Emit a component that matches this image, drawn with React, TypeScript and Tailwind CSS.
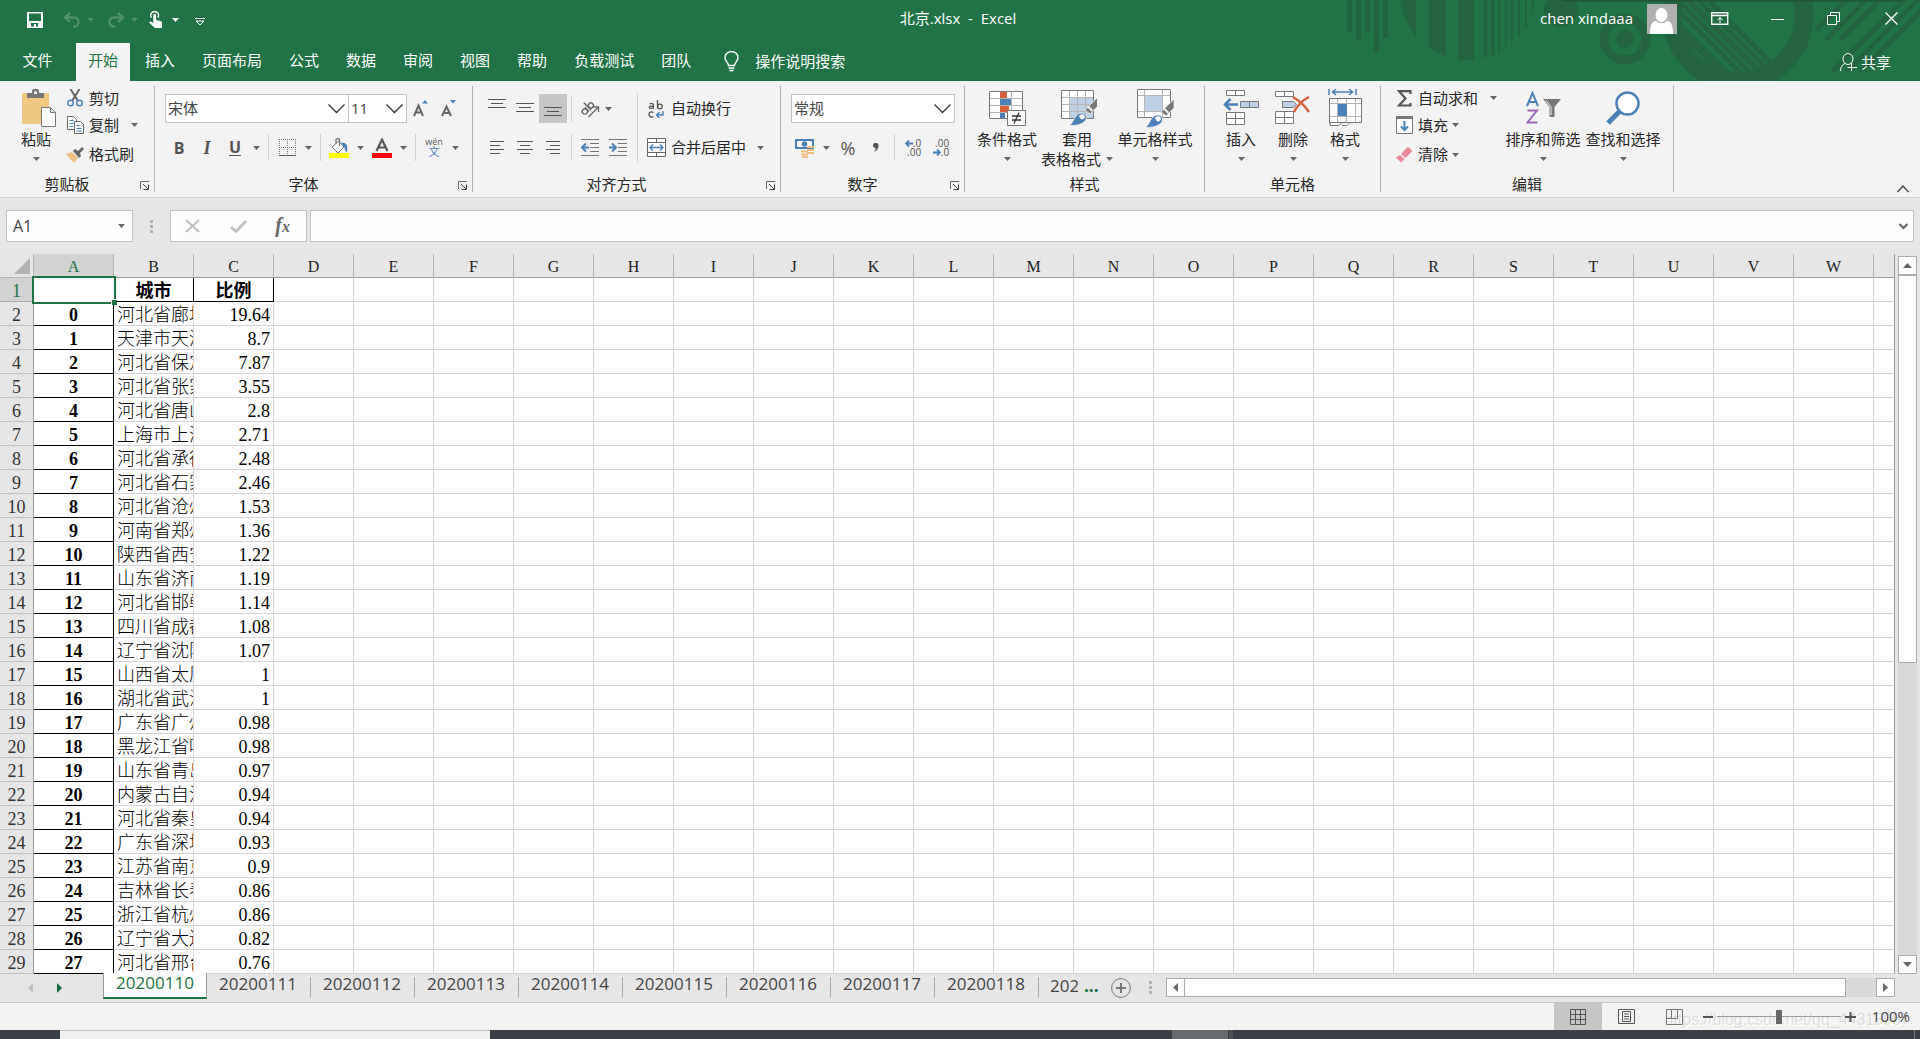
import type { ReactNode } from "react";

const UI_FONT = "font-['Open_Sans','Noto_Sans_CJK_SC',sans-serif]";
const CELL_FONT = "font-['Liberation_Serif','Noto_Sans_CJK_SC',serif]";

const tabs = ["插入", "页面布局", "公式", "数据", "审阅", "视图", "帮助", "负载测试", "团队"];

const columns = "ABCDEFGHIJKLMNOPQRSTUVW".split("");

const rows: [string, string][] = [
  ["河北省廊坊市", "19.64"],
  ["天津市天津市", "8.7"],
  ["河北省保定市", "7.87"],
  ["河北省张家口市", "3.55"],
  ["河北省唐山市", "2.8"],
  ["上海市上海市", "2.71"],
  ["河北省承德市", "2.48"],
  ["河北省石家庄市", "2.46"],
  ["河北省沧州市", "1.53"],
  ["河南省郑州市", "1.36"],
  ["陕西省西安市", "1.22"],
  ["山东省济南市", "1.19"],
  ["河北省邯郸市", "1.14"],
  ["四川省成都市", "1.08"],
  ["辽宁省沈阳市", "1.07"],
  ["山西省太原市", "1"],
  ["湖北省武汉市", "1"],
  ["广东省广州市", "0.98"],
  ["黑龙江省哈尔滨市", "0.98"],
  ["山东省青岛市", "0.97"],
  ["内蒙古自治区", "0.94"],
  ["河北省秦皇岛市", "0.94"],
  ["广东省深圳市", "0.93"],
  ["江苏省南京市", "0.9"],
  ["吉林省长春市", "0.86"],
  ["浙江省杭州市", "0.86"],
  ["辽宁省大连市", "0.82"],
  ["河北省邢台市", "0.76"],
];

const sheets = [
  "20200111",
  "20200112",
  "20200113",
  "20200114",
  "20200115",
  "20200116",
  "20200117",
  "20200118",
];

/* Small shared pieces */

function Caret({ className = "fill-[#666]" }: { className?: string }) {
  return (
    <svg width="7" height="4" viewBox="0 0 7 4" className={className}>
      <path d="M0 0h7L3.5 4z" />
    </svg>
  );
}

function MenuButton({ label, wide }: { label: string; wide?: boolean }) {
  return (
    <button
      aria-label={label}
      className={`flex h-7 shrink-0 items-center justify-center ${wide ? "w-7" : "w-[15px]"}`}
    >
      <Caret />
    </button>
  );
}

function IconButton({
  label,
  active,
  children,
}: {
  label: string;
  active?: boolean;
  children: ReactNode;
}) {
  return (
    <button
      aria-label={label}
      className={`flex h-[29px] w-7 shrink-0 items-center justify-center ${active ? "bg-[#c6c6c6]" : ""}`}
    >
      {children}
    </button>
  );
}

function Separator() {
  return <div className="mx-1 h-[27px] w-px shrink-0 bg-[#d2d2d2]" />;
}

function Combo({
  label,
  value,
  className,
}: {
  label: string;
  value: string;
  className: string;
}) {
  return (
    <div className={`relative h-[29px] ${className}`}>
      <select
        aria-label={label}
        className="h-full w-full appearance-none border border-[#c1c1c1] bg-white pl-[2px] text-[15px] text-[#444] outline-none"
      >
        <option>{value}</option>
      </select>
      <svg
        width="17"
        height="10"
        viewBox="0 0 17 10"
        className="pointer-events-none absolute top-[10px] right-1 fill-none stroke-[#333]"
      >
        <path d="M.5 .5l8 8 8-8" strokeWidth="1.3" />
      </svg>
    </div>
  );
}

function Group({
  label,
  launcher,
  className,
  children,
}: {
  label: string;
  launcher?: boolean;
  className: string;
  children: ReactNode;
}) {
  return (
    <section
      aria-label={label}
      className={`flex h-[106px] shrink-0 flex-col border-r border-[#b1b1b1] ${className}`}
    >
      <div className="flex-1">{children}</div>
      <div className="flex h-[14px] items-start">
        <span className={`flex-1 text-center leading-3 ${launcher ? "pr-[6px]" : ""}`}>
          {label}
        </span>
        {launcher && (
          <button aria-label={`${label}设置`} className="mt-[3px] w-[14px]">
            <svg width="10" height="9" viewBox="0 0 10 9" className="fill-none stroke-[#666]">
              <path d="M.5 8V.5H9" />
              <path d="M3 3l5 5M8.500 3.500v5h-5" stroke="#444" />
            </svg>
          </button>
        )}
      </div>
    </section>
  );
}

function BigButton({
  label,
  second,
  className,
  children,
}: {
  label: string;
  second?: string;
  className: string;
  children: ReactNode;
}) {
  return (
    <button className={`flex shrink-0 flex-col items-center whitespace-nowrap ${className}`}>
      <span className="flex h-[43px] items-center justify-center">{children}</span>
      <span className="leading-5">{label}</span>
      <span className="flex h-5 items-center gap-[5px] leading-5">
        {second}
        <Caret />
      </span>
    </button>
  );
}

function SmallButton({
  label,
  menu,
  children,
}: {
  label: string;
  menu?: "near" | "far";
  children: ReactNode;
}) {
  return (
    <button className="flex items-center whitespace-nowrap">
      <span className="mr-1 flex w-5 justify-center">{children}</span>
      {label}
      {menu && (
        <span className={menu === "far" ? "ml-3" : "ml-1"}>
          <Caret />
        </span>
      )}
    </button>
  );
}

function Lines({ rows, y }: { rows: [number, number][]; y: number }) {
  return (
    <svg width="20" height="28" viewBox="0 0 20 28" className="stroke-[#555]">
      {rows.map(([x, w], i) => (
        <path key={i} d={`M${x} ${y + i * 4 + 0.5}h${w}`} />
      ))}
    </svg>
  );
}

/* Title bar */

function TitleArt() {
  const d = "#24633f";
  return (
    <svg width="580" height="81" viewBox="0 0 580 81" className="absolute top-0 right-0">
      <defs>
        <clipPath id="drum">
          <circle cx="128" cy="-8" r="68" />
        </clipPath>
        <clipPath id="wheel">
          <circle cx="398" cy="15" r="57" />
        </clipPath>
        <linearGradient id="shade" x1="0" x2="0" y1="0" y2="1">
          <stop offset="0" stopColor="#1f4a33" />
          <stop offset="1" stopColor="#217346" stopOpacity="0" />
        </linearGradient>
      </defs>
      <path
        fill={d}
        d="M7 0h5v32H7zM16 0h5v41h-5zM25 0h5v32h-5zM34 0h5v52h-5zM43 0h5v38h-5z"
      />
      <path
        clipPath="url(#drum)"
        fill={d}
        d="M60 0h16v70H60zM89 0h17v70H89zM118 0h16v70h-16zM144 0h3v70h-3zM151 0h3v70h-3zM158 0h2v70h-2zM165 0h2v70h-2zM171 0h2v70h-2zM178 0h2v70h-2zM185 0h2v70h-2zM192 0h2v70h-2z"
      />
      <circle cx="221" cy="10" r="17" fill={d} />
      <circle cx="285" cy="39" r="21" fill="none" stroke={d} strokeWidth="9" />
      <circle cx="285" cy="39" r="9" fill={d} />
      <circle cx="398" cy="15" r="66" fill="none" stroke={d} strokeWidth="19" />
      <g clipPath="url(#wheel)" stroke={d} strokeWidth="5">
        <path d="M356 -12l84 84M346 -12l84 84M336 -12l84 84M326 -12l84 84M316 -12l84 84" />
        <path d="M302 -10l84 84" strokeWidth="9" />
      </g>
      <g stroke={d} strokeWidth="5">
        <path d="M486 40L530 -4M500 40L544 -4M492 72L568 -4M506 72L582 -4M520 72L596 -4M476 30L506 0" />
      </g>
      <path fill="url(#shade)" d="M222 0h340v4H222z" />
    </svg>
  );
}

function TitleBar() {
  return (
    <div className="relative grid h-[43px] grid-cols-3 items-start text-white">
      <div className="flex h-10 items-center pl-[27px]">
        <button aria-label="保存">
          <svg width="16" height="16" viewBox="0 0 16 16" className="fill-white">
            <path
              fillRule="evenodd"
              d="M0 0h16v16H0zM2 1.500v7.500h12V1.500zM4 11v3.500h3V12h2v2.500h2V11z"
            />
          </svg>
        </button>
        <button aria-label="撤消" className="ml-5 flex items-center gap-[6px]">
          <svg width="18" height="16" viewBox="0 0 18 16" className="fill-none stroke-[#4f9068]">
            <path d="M7 1L2 5.500l5 4.500M2.500 5.500H11c6 0 6 9 0 9h-1" strokeWidth="2.500" />
          </svg>
          <Caret className="fill-[#4f9068]" />
        </button>
        <button aria-label="恢复" className="ml-[13px] flex items-center gap-[6px]">
          <svg width="18" height="16" viewBox="0 0 18 16" className="fill-none stroke-[#4f9068]">
            <path d="M11 1l5 4.500L11 10M15.500 5.500H7c-6 0-6 9 0 9h1" strokeWidth="2.500" />
          </svg>
          <Caret className="fill-[#4f9068]" />
        </button>
        <button aria-label="触摸/鼠标模式" className="ml-[11px] flex items-center gap-[10px]">
          <svg width="13" height="18" viewBox="0 0 13 18" className="fill-white">
            <path d="M2.500 6.500A3.800 3.800 0 1 1 8.800 6.500" fill="none" stroke="#fff" strokeWidth="1.400" />
            <path d="M4.300 4.500a1.400 1.400 0 0 1 2.800 0V9l4.400 1c1 .3 1.500 1 1.500 2v5H6L.5 12c-.8-1 .6-2.200 1.800-1.300l2 1.300z" />
          </svg>
          <Caret className="fill-white" />
        </button>
        <button aria-label="自定义快速访问工具栏" className="ml-4 pt-[3px]">
          <svg width="10" height="8" viewBox="0 0 10 8" className="fill-none stroke-white">
            <path d="M0 .5h10M1 3l4 4 4-4z" />
          </svg>
        </button>
      </div>
      <h1 className="flex h-[37px] items-center justify-center pr-1 text-[15px] whitespace-pre">
        北京.xlsx  -  Excel
      </h1>
      <div className="flex h-[37px] items-center justify-end pr-[22px]">
        <span className="mr-[14px] text-[15px]">chen xindaaa</span>
        <svg width="30" height="30" viewBox="0 0 30 30">
          <path fill="#b1b1b1" d="M0 0h30v30H0z" />
          <ellipse cx="14.500" cy="11" rx="6" ry="7" fill="#fff" />
          <path fill="#fff" d="M3 30c0-9 2-13 6-13 3 3 8 3 11 0 4 0 6 4 6 13z" />
        </svg>
        <button aria-label="功能区显示选项" className="ml-[34px]">
          <svg width="18" height="13" viewBox="0 0 18 13" className="fill-none stroke-white">
            <path d="M.75 .75h16v11.500h-16zM1 3.500h16" strokeWidth="1.300" />
            <path d="M9 11V5.500M6.500 8L9 5.500 11.500 8" />
          </svg>
        </button>
        <button aria-label="最小化" className="ml-[42px]">
          <svg width="13" height="13" viewBox="0 0 13 13" className="stroke-white">
            <path d="M0 7.500h13" />
          </svg>
        </button>
        <button aria-label="向下还原" className="ml-[43px]">
          <svg width="13" height="13" viewBox="0 0 13 13" className="fill-none stroke-white">
            <path d="M.5 3.500h9v9h-9zM3.500 3.500v-3h9v9h-3" />
          </svg>
        </button>
        <button aria-label="关闭" className="ml-[45px]">
          <svg width="13" height="13" viewBox="0 0 13 13" className="stroke-white">
            <path d="M.5 .5l12 12M12.500 .5l-12 12" strokeWidth="1.300" />
          </svg>
        </button>
      </div>
    </div>
  );
}

function RibbonTabs() {
  return (
    <nav className="relative flex h-[38px] items-stretch text-[15px] text-white">
      <button className="mr-px w-[75px] pb-1">文件</button>
      <div className="flex gap-[3px]">
        <button className="bg-[#f3f3f3] px-3 pb-1 text-[#217346]">开始</button>
        {tabs.map((tab) => (
          <button key={tab} className="px-3 pb-1">
            {tab}
          </button>
        ))}
      </div>
      <button className="ml-[21px] flex items-center gap-4 pb-[2px]">
        <svg width="15" height="21" viewBox="0 0 15 21" className="fill-none stroke-white">
          <path
            d="M4.500 14.500c0-3-3.500-4-3.500-8a6.500 6 0 0 1 13 0c0 4-3.500 5-3.500 8zM4.500 17h6M5.500 19.500h4"
            strokeWidth="1.400"
          />
        </svg>
        操作说明搜索
      </button>
      <button className="mr-[29px] ml-auto flex items-center gap-1">
        <svg width="17" height="19" viewBox="0 0 17 19" className="fill-none stroke-white">
          <ellipse cx="8" cy="6" rx="5" ry="5.500" />
          <path d="M.5 18c0-4 2-6.500 4.500-7.500M11.500 10v8M7.500 14.500H17" />
        </svg>
        共享
      </button>
    </nav>
  );
}

/* Ribbon */

function ClipboardGroup() {
  return (
    <Group label="剪贴板" launcher className="w-[155px]">
      <div className="flex">
        <BigButton label="粘贴" className="ml-[14px] w-11">
          <svg width="44" height="38" viewBox="-7 0 44 38">
            <rect x="1" y="4" width="27" height="31" rx="1" fill="#edc880" />
            <path fill="#777" d="M6 4h5V1.500Q11 0 12.500 0h4Q18 0 18 1.500V4h5v5H6z" />
            <path fill="#f3f3f3" d="M13 2.500h3V5h-3z" />
            <path fill="#fff" stroke="#777" d="M20.500 18.500h9l5 5v14h-14zM29.500 18.500v5h5" />
          </svg>
        </BigButton>
        <div className="ml-[7px] grid grid-rows-[24px_30px_29px] justify-items-start">
          <SmallButton label="剪切">
            <svg width="16" height="18" viewBox="0 0 16 18" className="fill-none">
              <path d="M3.500 0l7.500 12M12.500 0L5 12" stroke="#666" strokeWidth="2" />
              <circle cx="3.500" cy="14" r="2.800" stroke="#4a80b8" strokeWidth="1.400" />
              <circle cx="12.500" cy="14" r="2.800" stroke="#4a80b8" strokeWidth="1.400" />
            </svg>
          </SmallButton>
          <SmallButton label="复制" menu="far">
            <svg width="17" height="18" viewBox="0 0 17 18">
              <path fill="#fff" stroke="#666" d="M.5 .5h6l3 3v10h-9z" />
              <path stroke="#4a80b8" d="M2.500 4.500h4M2.500 7.500h4M2.500 10.500h4" />
              <path fill="#fff" stroke="#666" d="M7.500 5.500h6l3 3v9h-9z" />
              <path stroke="#4a80b8" d="M9.500 9.500h3M9.500 12.500h5M9.500 15h5" />
            </svg>
          </SmallButton>
          <SmallButton label="格式刷">
            <svg width="18" height="16" viewBox="0 0 18 16">
              <path fill="#edc080" d="M0 7l6-2 6 6-4 5z" />
              <path fill="#666" d="M7 4l2-2 3 2 4-4 2 2-4 4 1 3-2 2z" />
            </svg>
          </SmallButton>
        </div>
      </div>
    </Group>
  );
}

function FontGroup() {
  return (
    <Group label="字体" launcher className="w-[318px]">
      <div className="flex flex-col gap-[11px] pt-2 pl-[10px]">
        <div className="flex">
          <Combo label="字体" value="宋体" className="w-[184px]" />
          <Combo label="字号" value="11" className="-ml-px w-[59px]" />
          <IconButton label="增大字号">
            <svg width="16" height="18" viewBox="0 0 16 18">
              <path d="M1 16L5.500 5.500 10 16M2.500 12.500h6" fill="none" stroke="#666" strokeWidth="2" />
              <path d="M9 3.500L12 0l3 3.500z" fill="#4a80b8" />
            </svg>
          </IconButton>
          <IconButton label="减小字号">
            <svg width="16" height="18" viewBox="0 0 16 18">
              <path d="M1 16L5.500 6.500 10 16M3 13h5" fill="none" stroke="#666" strokeWidth="2" />
              <path d="M9 0h6l-3 3.500z" fill="#4a80b8" />
            </svg>
          </IconButton>
        </div>
        <div className="flex h-[27px] items-center text-[#555]">
          <IconButton label="加粗">
            <b className="text-base">B</b>
          </IconButton>
          <IconButton label="倾斜">
            <b className="font-['Liberation_Serif',serif] text-lg italic">I</b>
          </IconButton>
          <IconButton label="下划线">
            <b className="border-b border-[#555] text-base leading-4">U</b>
          </IconButton>
          <MenuButton label="下划线样式" />
          <Separator />
          <IconButton label="边框">
            <svg width="17" height="17" viewBox="0 0 17 17" className="fill-none stroke-[#777]">
              <path d="M0 .5h17M.5 0v16M16.500 0v16M8.500 0v16M0 8.500h17" strokeDasharray="1 1" />
              <path d="M0 16.500h17" stroke="#555" />
            </svg>
          </IconButton>
          <MenuButton label="边框样式" />
          <Separator />
          <IconButton label="填充颜色">
            <svg width="20" height="20" viewBox="0 0 20 20">
              <path d="M3 9l7-6 5 6-6 6z" fill="#fff" stroke="#777" />
              <path d="M7 6V1.500Q9 -.5 10.500 1.500V8" fill="none" stroke="#777" strokeWidth="1.300" />
              <path d="M12 5c6-1 7 3 6 9-2 0-2-4-3-5z" fill="#4a80b8" />
              <path d="M0 15h20v5H0z" fill="#ff0" />
            </svg>
          </IconButton>
          <MenuButton label="填充颜色选项" />
          <IconButton label="字体颜色">
            <svg width="20" height="20" viewBox="0 0 20 20">
              <path d="M4.500 13L10 1.500 15.500 13M6.500 9.500h7" fill="none" stroke="#555" strokeWidth="2.200" />
              <path d="M0 15h20v5H0z" fill="red" />
            </svg>
          </IconButton>
          <MenuButton label="字体颜色选项" />
          <Separator />
          <IconButton label="拼音">
            <span className="flex flex-col items-center leading-none">
              <span className="text-[9px] leading-[8px]">wén</span>
              <span className="text-[11px] leading-[11px] text-[#4a80b8]">文</span>
            </span>
          </IconButton>
          <MenuButton label="拼音选项" />
        </div>
      </div>
    </Group>
  );
}

function AlignGroup() {
  return (
    <Group label="对齐方式" launcher className="w-[308px]">
      <div className="flex pl-[10px]">
        <div className="flex flex-col gap-[11px] pt-2">
          <div className="flex items-center">
            <IconButton label="顶端对齐">
              <Lines y={4} rows={[[1, 18], [4, 12], [1, 18]]} />
            </IconButton>
            <IconButton label="垂直居中">
              <Lines y={8} rows={[[1, 18], [4, 12], [1, 18]]} />
            </IconButton>
            <IconButton label="底端对齐" active>
              <Lines y={12} rows={[[1, 18], [4, 12], [1, 18]]} />
            </IconButton>
            <Separator />
            <IconButton label="方向">
              <svg width="20" height="18" viewBox="0 0 20 18" className="fill-none stroke-[#666]">
                <g transform="rotate(-45 7 8)" strokeWidth="1.400">
                  <circle cx="3" cy="9" r="2.600" />
                  <path d="M6 6v6M8.500 2v10" />
                  <circle cx="11.500" cy="9" r="2.600" />
                </g>
                <path d="M8.500 17L18 7.500M13.500 7h5v5" strokeWidth="1.300" />
              </svg>
            </IconButton>
            <button aria-label="方向选项" className="flex w-2 justify-center">
              <Caret />
            </button>
          </div>
          <div className="flex h-[27px] items-center">
            <IconButton label="左对齐">
              <Lines y={7} rows={[[3, 14], [3, 10], [3, 14], [3, 10]]} />
            </IconButton>
            <IconButton label="居中">
              <Lines y={7} rows={[[2, 16], [5, 10], [2, 16], [5, 10]]} />
            </IconButton>
            <IconButton label="右对齐">
              <Lines y={7} rows={[[3, 14], [7, 10], [3, 14], [7, 10]]} />
            </IconButton>
            <Separator />
            <IconButton label="减少缩进量">
              <svg width="18" height="17" viewBox="0 0 18 17" className="fill-none stroke-[#777]">
                <path d="M0 .5h18M9 4.500h9M9 8.500h9M9 12.500h9M0 16.500h18" />
                <path d="M8 8.500H1.500M5 4.500l-4 4 4 4" stroke="#4a80b8" strokeWidth="2" />
              </svg>
            </IconButton>
            <IconButton label="增加缩进量">
              <svg width="18" height="17" viewBox="0 0 18 17" className="fill-none stroke-[#777]">
                <path d="M0 .5h18M9 4.500h9M9 8.500h9M9 12.500h9M0 16.500h18" />
                <path d="M0 8.500h6.500M3 4.500l4 4-4 4" stroke="#4a80b8" strokeWidth="2" />
              </svg>
            </IconButton>
          </div>
        </div>
        <div className="mt-[7px] ml-[5px] h-[69px] w-px bg-[#d2d2d2]" />
        <div className="ml-[7px] flex flex-col gap-[11px] pt-2">
          <button className="flex h-[29px] items-center gap-1">
            <span className="flex w-[22px] justify-center">
              <svg width="16" height="18" viewBox="0 0 16 18" className="fill-none stroke-[#555]">
                <path d="M1.500 4Q5 2.500 5.500 5v4M5.500 6Q1 6 1.200 7.500 2 9.500 5.500 7.500M9.500 0v8.500" strokeWidth="1.300" />
                <circle cx="12" cy="6.500" r="2.300" strokeWidth="1.300" />
                <path d="M5.500 12.500C2 11 1 13 1 14.500S3 18 5.500 16.500" strokeWidth="1.300" />
                <path d="M15 11v4H9M11.500 12l-3 3 3 3" stroke="#4a80b8" strokeWidth="1.400" />
              </svg>
            </span>
            自动换行
          </button>
          <div className="flex h-[27px] items-center">
            <button className="flex items-center gap-1">
              <span className="flex w-[22px] justify-center">
                <svg width="19" height="19" viewBox="0 0 19 19" className="fill-white stroke-[#666]">
                  <path d="M.5 .5h18v18H.5zM.5 4.500h18M.5 14.500h18M9.500 0v4M9.500 15v4" />
                  <path d="M3 9.500h13M6 6.500l-3 3 3 3M13 6.500l3 3-3 3" fill="none" stroke="#4a80b8" strokeWidth="1.400" />
                </svg>
              </span>
              合并后居中
            </button>
            <MenuButton label="合并选项" wide />
          </div>
        </div>
      </div>
    </Group>
  );
}

function NumberGroup() {
  return (
    <Group label="数字" launcher className="w-[184px]">
      <div className="flex flex-col gap-[11px] pt-2 pl-[10px]">
        <Combo label="数字格式" value="常规" className="w-[164px]" />
        <div className="flex h-[27px] items-center text-[#555]">
          <IconButton label="会计数字格式">
            <svg width="20" height="20" viewBox="0 0 20 20">
              <path fill="#4a80b8" d="M0 1h19v10H0z" />
              <path fill="#fff" d="M2 3.500l2-.5h11l2 .5v5l-2 .5H4l-2-.5z" />
              <circle cx="9.500" cy="6" r="2.700" fill="#4a80b8" />
              <path stroke="#edc080" strokeWidth="2" d="M12 9h7M12 12h7M12 15h7M6 13.500h7M6 16.500h7M7 19h6" />
            </svg>
          </IconButton>
          <MenuButton label="会计数字格式选项" />
          <IconButton label="百分比样式">
            <span className="text-lg">%</span>
          </IconButton>
          <IconButton label="千位分隔样式">
            <svg width="6" height="9" viewBox="0 0 6 9" className="fill-[#555]">
              <path d="M0 2.500a2.600 2.600 0 0 1 5.500 0C5.500 6 3.500 8 .8 9 2.500 7.500 2.800 6 2.600 5 1 5 0 4 0 2.500z" />
            </svg>
          </IconButton>
          <Separator />
          <IconButton label="增加小数位数">
            <span className="flex flex-col items-end text-[10px] leading-[9px]">
              <span className="flex items-center">
                <svg width="8" height="7" viewBox="0 0 8 7" className="fill-none stroke-[#4a80b8]">
                  <path d="M8 3.500H1.500M4 .5l-3 3 3 3" strokeWidth="1.800" />
                </svg>
                .0
              </span>
              <span>.00</span>
            </span>
          </IconButton>
          <IconButton label="减少小数位数">
            <span className="flex flex-col items-end text-[10px] leading-[9px]">
              <span>.00</span>
              <span className="flex items-center">
                <svg width="8" height="7" viewBox="0 0 8 7" className="fill-none stroke-[#4a80b8]">
                  <path d="M0 3.500h6.500M4 .5l3 3-3 3" strokeWidth="1.800" />
                </svg>
                .0
              </span>
            </span>
          </IconButton>
        </div>
      </div>
    </Group>
  );
}

function Brush() {
  return (
    <>
      <path fill="#777" stroke="#f3f3f3" strokeWidth=".8" d="M38 8v9l-8 8-5-4z" />
      <path fill="#f3f3f3" d="M29 17l4 4-1.500 1.500-4-4z" />
      <path fill="#4a80b8" stroke="#f3f3f3" strokeWidth=".8" d="M9 36c5-1 5-12 13-12 5 0 6 6 2 9-4 3-10 4-15 3z" />
      <path fill="#fff" d="M19 27c2-3 6-2 6 1-1 3-4 3-5 1z" />
    </>
  );
}

function StyleGroup() {
  return (
    <Group label="样式" className="w-60">
      <div className="flex pl-2">
        <BigButton label="条件格式" className="w-[68px]">
          <svg width="38" height="36" viewBox="0 0 38 36">
            <path fill="#fff" stroke="#777" d="M1.500 1.500h33v27h-33z" />
            <path stroke="#b5b5b5" d="M2 8.500h32M2 15.500h32M2 22.500h32M12.500 2v26M23.500 2v26" />
            <path fill="#d9603b" d="M12 2h7v6h-7zM12 16h9v6h-9z" />
            <path fill="#4a80b8" d="M12 9h11v6H12zM12 23h5v5h-5z" />
            <path fill="#fff" stroke="#777" d="M19.500 20.500h18v15h-18z" />
            <path stroke="#333" strokeWidth="1.300" d="M24 26h9M24 30h9M31 22.500l-5 11" />
          </svg>
        </BigButton>
        <BigButton label="套用" second="表格格式" className="w-[72px]">
          <svg width="39" height="37" viewBox="-2 0 39 37">
            <path fill="#fff" stroke="#777" d="M1.500 1.500h32v28h-32z" />
            <path fill="#bdd0e6" d="M10 9h23v20H10z" />
            <path stroke="#b5b5b5" d="M2 8.500h31M2 15.500h31M2 22.500h31M9.500 2v27M17.500 2v27M25.500 2v27" />
            <Brush />
          </svg>
        </BigButton>
        <BigButton label="单元格样式" className="ml-[3px] w-[78px]">
          <svg width="39" height="40" viewBox="0 0 39 40">
            <path fill="#fff" stroke="#777" d="M1.500 1.500h33v28h-33z" />
            <path stroke="#b5b5b5" d="M2 7.500h32M2 23.500h32M8.500 2v27M26.500 2v27" />
            <path fill="#bdd0e6" d="M9 8h17v15H9z" />
            <g transform="translate(0 3)">
              <Brush />
            </g>
          </svg>
        </BigButton>
      </div>
    </Group>
  );
}

function CellsGroup() {
  return (
    <Group label="单元格" className="w-[176px]">
      <div className="flex pl-[10px]">
        <BigButton label="插入" className="w-[52px]">
          <svg width="36" height="35" viewBox="0 0 36 35" className="stroke-[#777]">
            <path fill="#fff" d="M3.500 .5h18v5h-18zM12.500 .5v5M3.500 22.500h18v12h-18zM3.500 28.500h18M12.500 22.500v12" />
            <path fill="#bdd0e6" d="M17.500 11.500h18v6h-18zM26.500 11.500v6" />
            <path fill="none" stroke="#4a80b8" strokeWidth="2.500" d="M15 14.500H2M7.500 9L2 14.500 7.500 20" />
          </svg>
        </BigButton>
        <BigButton label="删除" className="w-[52px]">
          <svg width="36" height="35" viewBox="0 0 36 35" className="stroke-[#777]">
            <path fill="#fff" d="M.5 1.500h18v5H.5zM9.500 1.500v5M.5 21.500h18v12H.5zM.5 27.500h18M9.500 21.500v12" />
            <path fill="#bdd0e6" d="M7.500 11.500h11l3 3-3 3h-11z" />
            <path fill="none" stroke="#d9603b" strokeWidth="2.500" d="M18 7c5 3 12 9 16 15M34 7c-6 3-12 9-15 15" />
          </svg>
        </BigButton>
        <BigButton label="格式" className="w-[52px]">
          <svg width="35" height="38" viewBox="0 0 35 38">
            <path fill="none" stroke="#4a80b8" strokeWidth="1.500" d="M1 0v6M28 0v6M4 3h21M8 0L4.500 3 8 6M21 0l3.500 3L21 6" />
            <path fill="#fff" stroke="#777" d="M1.500 9.500h32v24h-32zM2 33.500v3h9l3-3M14 36.500h5l3-3" />
            <path stroke="#b5b5b5" d="M2 14.500h31M2 27.500h31M9.500 10v23M18.500 10v23M27.500 10v23" />
            <path fill="#4a80b8" d="M10 15h9v12h-9z" />
          </svg>
        </BigButton>
      </div>
    </Group>
  );
}

function EditGroup() {
  return (
    <Group label="编辑" className="w-[293px]">
      <div className="flex">
        <div className="ml-[13px] grid w-[105px] grid-rows-[24px_30px_29px] justify-items-start">
          <SmallButton label="自动求和" menu="far">
            <svg width="15" height="17" viewBox="0 0 15 17" className="fill-none stroke-[#555]">
              <path d="M13.500 4V1.200H2L8.500 8.500 2 15.500h11.500V13" strokeWidth="2.200" />
            </svg>
          </SmallButton>
          <SmallButton label="填充" menu="near">
            <svg width="17" height="18" viewBox="0 0 17 18">
              <path fill="#fff" stroke="#777" d="M.5 .5h16v17H.5z" />
              <path fill="#777" d="M0 0h17v3H0z" />
              <path fill="none" stroke="#4a80b8" strokeWidth="2" d="M8.500 5v9M5 10.500l3.500 3.500 3.500-3.500" />
            </svg>
          </SmallButton>
          <SmallButton label="清除" menu="near">
            <svg width="16" height="16" viewBox="0 0 16 16" className="fill-[#e88a9a]">
              <path d="M5 7l6-6.500q1-.8 2 0L15.500 3q.8 1 0 2L9.500 11z" />
              <path d="M4 8l4.500 4.200L5 15.500.5 11q-.6-.5 0-1z" />
            </svg>
          </SmallButton>
        </div>
        <BigButton label="排序和筛选" className="ml-1 w-20">
          <svg width="35" height="34" viewBox="0 0 35 34" className="fill-none">
            <path d="M1 15L6.500 2 12 15M3 11h7" stroke="#4a80b8" strokeWidth="2" />
            <path d="M1.500 19.500h9.500L1.500 31.500h10" stroke="#9b66b8" strokeWidth="2" />
            <path fill="#777" d="M17 8h18l-6.500 8v10h-5V16z" />
            <path stroke="#f3f3f3" d="M20 9.500l5 6.500v8" />
          </svg>
        </BigButton>
        <BigButton label="查找和选择" className="w-20">
          <svg width="34" height="34" viewBox="0 0 34 34">
            <path stroke="#4a80b8" strokeWidth="5" d="M2 32l12-12" />
            <circle cx="21.500" cy="12.500" r="11" fill="#fff" stroke="#4a80b8" strokeWidth="2.500" />
          </svg>
        </BigButton>
      </div>
    </Group>
  );
}

function Ribbon() {
  return (
    <div className="flex h-[117px] border-b border-[#d2d2d2] bg-[#f3f3f3] pt-[5px] text-[15px] text-[#262626]">
      <ClipboardGroup />
      <FontGroup />
      <AlignGroup />
      <NumberGroup />
      <StyleGroup />
      <CellsGroup />
      <EditGroup />
      <button aria-label="折叠功能区" className="mr-[11px] mb-[4px] ml-auto self-end">
        <svg width="12" height="8" viewBox="0 0 12 8" className="fill-none stroke-[#444]">
          <path d="M.5 7L6 1l5.500 6" strokeWidth="1.300" />
        </svg>
      </button>
    </div>
  );
}

/* Formula bar */

function Dots() {
  return (
    <svg width="3" height="13" viewBox="0 0 3 13" className="shrink-0 fill-[#b1b1b1]">
      <path d="M0 0h3v3H0zM0 5h3v3H0zM0 10h3v3H0z" />
    </svg>
  );
}

function FormulaBar() {
  return (
    <div className="flex h-14 items-start pt-3 pr-[6px] pl-[6px]">
      <div className="flex h-8 w-[127px] items-center border border-[#c1c1c1] bg-[#fdfdfd]">
        <input
          aria-label="名称框"
          defaultValue="A1"
          className="w-full min-w-0 flex-1 bg-transparent pl-[6px] text-base text-[#444] outline-none"
        />
        <button aria-label="名称列表" className="mr-[7px]">
          <Caret />
        </button>
      </div>
      <div className="flex h-8 w-[37px] items-center justify-center">
        <Dots />
      </div>
      <div className="flex h-8 w-[137px] items-center justify-between border border-[#c1c1c1] bg-[#fdfdfd] pr-4 pl-[14px]">
        <button aria-label="取消">
          <svg width="16" height="14" viewBox="0 0 16 14" className="fill-none stroke-[#c1c1c1]">
            <path d="M1 1l13 12M14 1L1 13" strokeWidth="2.200" />
          </svg>
        </button>
        <button aria-label="输入">
          <svg width="17" height="13" viewBox="0 0 17 13" className="fill-none stroke-[#c1c1c1]">
            <path d="M1 7l5 4.500L16 1" strokeWidth="2.800" />
          </svg>
        </button>
        <button
          aria-label="插入函数"
          className="font-['Liberation_Serif',serif] text-xl leading-6 font-bold text-[#666] italic"
        >
          f<span className="text-base">x</span>
        </button>
      </div>
      <div className="ml-[3px] flex h-8 flex-1 items-center border border-[#c1c1c1] bg-[#fdfdfd]">
        <input aria-label="编辑栏" className="min-w-0 flex-1 bg-transparent px-2 outline-none" />
        <button aria-label="展开编辑栏" className="mr-[5px]">
          <svg width="9" height="7" viewBox="0 0 9 7" className="fill-none stroke-[#666]">
            <path d="M.5 1l4 4 4-4" strokeWidth="2.200" />
          </svg>
        </button>
      </div>
    </div>
  );
}

/* Grid */

function RowHeader({ n }: { n: number }) {
  return (
    <th
      className={`h-6 border-r border-b px-0 pt-[3px] pb-0 font-normal ${
        n === 1
          ? "border-r-[#217346] border-b-[#ababab] bg-[#d2d2d2] text-[#217346]"
          : "border-r-[#9c9c9c] border-b-[#c1c1c1] bg-[#e6e6e6] text-[#333]"
      }`}
    >
      {n}
    </th>
  );
}

function EmptyCells() {
  return (
    <>
      {columns.slice(3).map((col) => (
        <td key={col} className="border-r border-b border-[#d4d4d4] p-0" />
      ))}
      <td className="border-b border-[#d4d4d4] p-0" />
    </>
  );
}

function Sheet() {
  return (
    <div className="min-w-0 flex-1 overflow-hidden border-r border-[#9c9c9c]">
      <table
        className={`w-full table-fixed border-separate border-spacing-0 text-lg leading-5 text-black ${CELL_FONT}`}
      >
        <colgroup>
          <col className="w-[34px]" />
          {columns.map((col) => (
            <col key={col} className="w-20" />
          ))}
          <col />
        </colgroup>
        <thead className="bg-[#e6e6e6]">
          <tr>
            <th className="h-6 border-r border-b border-[#b5b5b5] p-0">
              <svg width="16" height="16" viewBox="0 0 16 16" className="ml-[14px] fill-[#b1b1b1]">
                <path d="M16 0v16H0z" />
              </svg>
            </th>
            {columns.map((col, i) => (
              <th
                key={col}
                className={`h-6 border-r border-b border-r-[#b5b5b5] border-b-[#9c9c9c] px-0 pt-[3px] pb-0 text-base leading-5 font-normal ${
                  i === 0 ? "bg-[#d2d2d2] text-[#217346]" : "text-[#222]"
                }`}
              >
                {col}
              </th>
            ))}
            <th className="border-b border-[#9c9c9c] p-0" />
          </tr>
        </thead>
        <tbody className="bg-white">
          <tr>
            <RowHeader n={1} />
            <td className="relative p-0">
              <div className="absolute -inset-x-[2px] -inset-y-[2px] border-2 border-[#217346]" />
              <div className="absolute -right-[3px] -bottom-[3px] h-[6px] w-[6px] border-t border-l border-white bg-[#217346]" />
            </td>
            <td className="border-r border-b border-black px-0 pt-[3px] pb-0 text-center font-bold">
              城市
            </td>
            <td className="border-r border-b border-black px-0 pt-[3px] pb-0 text-center font-bold">
              比例
            </td>
            <EmptyCells />
          </tr>
          {rows.map(([city, ratio], i) => (
            <tr key={i}>
              <RowHeader n={i + 2} />
              <td className="border-r border-b border-black px-0 pt-[3px] pb-0 text-center font-bold">
                {i}
              </td>
              <td className="overflow-hidden border-r border-b border-[#d4d4d4] pt-[3px] pr-0 pb-0 pl-[3px] font-light whitespace-nowrap">
                {city}
              </td>
              <td className="border-r border-b border-[#d4d4d4] pt-[3px] pr-[3px] pb-0 pl-0 text-right">
                {ratio}
              </td>
              <EmptyCells />
            </tr>
          ))}
        </tbody>
      </table>
    </div>
  );
}

function ScrollButton({ label, d }: { label: string; d: string }) {
  return (
    <button
      aria-label={label}
      className="flex h-[19px] w-[19px] shrink-0 items-center justify-center border border-[#ababab] bg-white"
    >
      <svg width="9" height="9" viewBox="0 0 9 9" className="fill-[#666]">
        <path d={d} />
      </svg>
    </button>
  );
}

function VerticalScroll() {
  return (
    <div className="flex w-[25px] flex-col pt-[2px] pl-[3px]">
      <ScrollButton label="向上滚动" d="M0 7h9L4.500 2z" />
      <div className="w-[19px] flex-1 bg-[#dadada]">
        <div className="h-[57%] border border-[#ababab] bg-white" />
      </div>
      <ScrollButton label="向下滚动" d="M0 2h9L4.500 7z" />
    </div>
  );
}

function SheetTabs() {
  return (
    <div className="flex h-[29px] items-start border-b border-[#c6c6c6] pr-[25px] text-[17px] text-[#444]">
      <div className="flex h-7 w-[103px] shrink-0 items-center pl-7">
        <button aria-label="上一个工作表">
          <svg width="5" height="10" viewBox="0 0 5 10" className="fill-[#c1c1c1]">
            <path d="M5 0v10L0 5z" />
          </svg>
        </button>
        <button aria-label="下一个工作表" className="ml-6">
          <svg width="5" height="10" viewBox="0 0 5 10" className="fill-[#0f6b3a]">
            <path d="M0 0v10l5-5z" />
          </svg>
        </button>
      </div>
      <button className="-mt-px h-[26px] w-[104px] shrink-0 border-x border-b-2 border-x-[#9c9c9c] border-b-[#217346] bg-white pb-1 leading-5 text-[#217346]">
        20200110
      </button>
      {sheets.map((name) => (
        <button
          key={name}
          className="flex h-6 w-[104px] shrink-0 items-start justify-center bg-[linear-gradient(#ababab,#ababab)] bg-[length:1px_21px] bg-right-bottom bg-no-repeat pr-[2px] leading-5"
        >
          {name}
        </button>
      ))}
      <button className="h-6 w-[39px] shrink-0 overflow-hidden pl-[11px] text-left leading-5">
        202
      </button>
      <button aria-label="更多工作表" className="ml-[6px] h-6 leading-5 font-bold text-[#217346]">
        ...
      </button>
      <div className="flex h-[27px] flex-1 items-center">
        <button aria-label="新工作表" className="ml-3">
          <svg width="20" height="20" viewBox="0 0 20 20" className="fill-none stroke-[#777]">
            <circle cx="10" cy="10" r="9.400" />
            <path d="M10 5v10M5 10h10" strokeWidth="2" />
          </svg>
        </button>
        <div className="mr-[14px] ml-[18px]">
          <Dots />
        </div>
        <ScrollButton label="向左滚动" d="M7 0v9L2 4.500z" />
        <div className="flex h-[19px] flex-1 bg-[#dadada]">
          <div className="-ml-px mr-[30px] flex-1 border border-[#ababab] bg-white" />
        </div>
        <ScrollButton label="向右滚动" d="M2 0v9l5-4.500z" />
      </div>
    </div>
  );
}

/* Status bar */

function StatusBar() {
  return (
    <div className="relative flex h-[27px] items-stretch justify-end bg-[#f3f3f3] pr-[10px] text-[#444]">
      <span className="pointer-events-none absolute right-[10px] bottom-0 font-['Liberation_Sans',sans-serif] text-base leading-5 text-[#dcdcdc] [text-shadow:1px_1px_0_#fff]">
        https://blog.csdn.net/qq_44315987
      </span>
      <button
        aria-label="普通"
        className="relative flex w-12 items-center justify-center bg-[#c6c6c6]"
      >
        <svg width="16" height="16" viewBox="0 0 16 16" className="fill-none stroke-[#555]">
          <path d="M.5 .5h15v15H.5zM.5 5.500h15M.5 10.500h15M5.500 .5v15M10.500 .5v15" />
        </svg>
      </button>
      <button aria-label="页面布局" className="relative flex w-12 items-center justify-center">
        <svg width="17" height="15" viewBox="0 0 17 15" className="fill-none stroke-[#555]">
          <path d="M.5 .5h16v14H.5zM4.500 2.500h8v10h-8zM6 5h5M6 7.500h5M6 10h5" />
        </svg>
      </button>
      <button aria-label="分页预览" className="relative flex w-12 items-center justify-center">
        <svg width="17" height="16" viewBox="0 0 17 16" className="fill-none stroke-[#777]">
          <path d="M.5 .5h16v15H.5zM5.500 0v9.500h-5M5.500 9.500h6V0" />
        </svg>
      </button>
      <div className="relative ml-[5px] flex items-center">
        <button aria-label="缩小">
          <svg width="10" height="12" viewBox="0 0 10 12" className="stroke-[#555]">
            <path d="M0 6h10" strokeWidth="2" />
          </svg>
        </button>
        <input
          type="range"
          aria-label="缩放级别"
          min={0}
          max={100}
          defaultValue={50}
          className="mx-1 h-4 w-[124px] appearance-none bg-[linear-gradient(#999,#999)] bg-[length:100%_1px] bg-center bg-no-repeat [&::-webkit-slider-thumb]:h-[14px] [&::-webkit-slider-thumb]:w-[6px] [&::-webkit-slider-thumb]:appearance-none [&::-webkit-slider-thumb]:bg-[#666]"
        />
        <button aria-label="放大">
          <svg width="11" height="12" viewBox="0 0 11 12" className="stroke-[#555]">
            <path d="M0 6h11M5.500 1v10" strokeWidth="2" />
          </svg>
        </button>
        <button className="ml-3 w-[42px] text-right text-[15px]">100%</button>
      </div>
    </div>
  );
}

function Taskbar() {
  return (
    <div className="flex h-[9px] bg-[#3b4047]">
      <div className="ml-[60px] w-[430px] border-t border-[#c1c1c1] bg-[#f0f0f0]" />
      <div className="ml-[682px] w-14 bg-[#66696e]" />
      <div className="ml-px w-1 bg-[#4d5157]" />
      <div className="mr-[5px] ml-auto w-px bg-[#777b80]" />
    </div>
  );
}

export default function App() {
  return (
    <div className={`w-full overflow-hidden bg-[#e6e6e6] ${UI_FONT}`}>
      <header className="relative bg-[#217346]">
        <TitleArt />
        <TitleBar />
        <RibbonTabs />
      </header>
      <Ribbon />
      <FormulaBar />
      <main className="flex">
        <Sheet />
        <VerticalScroll />
      </main>
      <SheetTabs />
      <StatusBar />
      <Taskbar />
    </div>
  );
}
